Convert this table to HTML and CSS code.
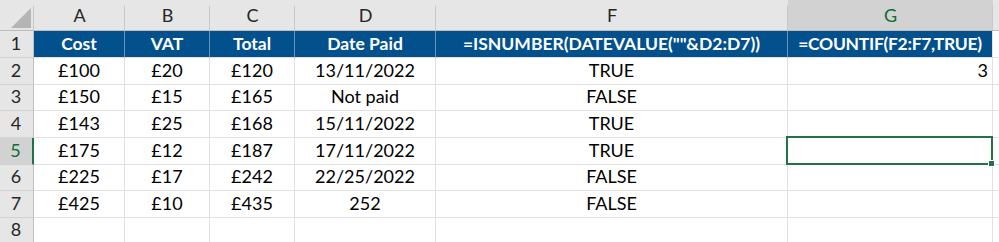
FILE: index.html
```html
<!DOCTYPE html>
<html>
<head>
<meta charset="utf-8">
<link rel="stylesheet" href="styles.css">
</head>
<body>
<div class="sheet">
  <div class="ch corner"><svg width="33" height="30" viewBox="0 0 33 30"><polygon points="31,8 31,28 11,28" fill="#b5b5b5"/></svg></div>
  <div class="ch">A</div><div class="ch">B</div><div class="ch">C</div><div class="ch">D</div><div class="ch">F</div><div class="ch sel">G</div><div class="ch rest"></div>

  <div class="rh">1</div>
  <div class="c hd">Cost</div><div class="c hd">VAT</div><div class="c hd">Total</div><div class="c hd">Date Paid</div><div class="c hd">=ISNUMBER(DATEVALUE(""&amp;D2:D7))</div><div class="c hd last">=COUNTIF(F2:F7,TRUE)</div><div class="c e"></div>

  <div class="rh">2</div>
  <div class="c">£100</div><div class="c">£20</div><div class="c">£120</div><div class="c">13/11/2022</div><div class="c">TRUE</div><div class="c r">3</div><div class="c e"></div>

  <div class="rh">3</div>
  <div class="c">£150</div><div class="c">£15</div><div class="c">£165</div><div class="c">Not paid</div><div class="c">FALSE</div><div class="c r"></div><div class="c e"></div>

  <div class="rh">4</div>
  <div class="c">£143</div><div class="c">£25</div><div class="c">£168</div><div class="c">15/11/2022</div><div class="c">TRUE</div><div class="c r"></div><div class="c e"></div>

  <div class="rh sel">5</div>
  <div class="c">£175</div><div class="c">£12</div><div class="c">£187</div><div class="c">17/11/2022</div><div class="c">TRUE</div><div class="c r active"></div><div class="c e"></div>

  <div class="rh">6</div>
  <div class="c">£225</div><div class="c">£17</div><div class="c">£242</div><div class="c">22/25/2022</div><div class="c">FALSE</div><div class="c r"></div><div class="c e"></div>

  <div class="rh">7</div>
  <div class="c">£425</div><div class="c">£10</div><div class="c">£435</div><div class="c">252</div><div class="c">FALSE</div><div class="c r"></div><div class="c e"></div>

  <div class="rh">8</div>
  <div class="c"></div><div class="c"></div><div class="c"></div><div class="c"></div><div class="c"></div><div class="c r"></div><div class="c e"></div>
</div>
</body>
</html>
```
FILE: styles.css
```css
html, body {
  margin: 0;
  padding: 0;
  background: #ffffff;
  overflow: hidden;
}

.sheet {
  display: grid;
  grid-template-columns: 34px 91px 85px 85px 141px 352px 205px 1fr;
  grid-template-rows: 31px 27px 27px 26px 27px 27px 26px 27px 26px;
  width: 999px;
  height: 242px;
  font-family: Lato, "Open Sans", sans-serif;
  font-size: 18px;
  color: #000;
}

.ch {
  box-sizing: border-box;
  background: linear-gradient(#c8c8c8, #c8c8c8) right 6px / 1px calc(100% - 6px) no-repeat, #e6e6e6;
  border-bottom: 1px solid #bdbdbd;
  display: flex;
  align-items: flex-end;
  justify-content: center;
  padding-bottom: 4px;
  color: #262626;
}

.ch.corner {
  padding: 0;
  align-items: stretch;
  justify-content: flex-start;
}

.ch.sel {
  background: linear-gradient(#c8c8c8, #c8c8c8) right 6px / 1px calc(100% - 6px) no-repeat, #d2d2d2;
  color: #0f6b35;
}

.ch.rest {
  background: #e6e6e6;
}

.rh {
  box-sizing: border-box;
  background: #e6e6e6;
  border-right: 1px solid #c0c0c0;
  border-bottom: 1px solid #d2d2d2;
  display: flex;
  align-items: flex-end;
  justify-content: center;
  padding-bottom: 3px;
  padding-right: 1px;
  color: #262626;
}

.rh.sel {
  background: #d2d2d2;
  color: #0f6b35;
  border-right: 2px solid #217346;
}

.c {
  box-sizing: border-box;
  border-right: 1px solid #e1e1e1;
  border-bottom: 1px solid #e1e1e1;
  display: flex;
  align-items: flex-end;
  justify-content: center;
  padding-bottom: 3px;
  white-space: nowrap;
}

.c.r {
  justify-content: flex-end;
  padding-right: 4px;
}

.c.e {
  border-right: none;
}

.c.hd {
  background: #02508c;
  color: #ffffff;
  font-weight: 700;
  font-size: 17.5px;
  border-right: 1px solid #6b93bd;
  border-bottom: 1px solid #e1e1e1;
}

.c.hd.last {
  border-right: 1px solid #e1e1e1;
  letter-spacing: -0.3px;
}

.active {
  position: relative;
}

.active::before {
  content: "";
  position: absolute;
  left: -2px;
  top: -2px;
  right: -1px;
  bottom: -1px;
  border: 2px solid #217346;
}

.active::after {
  content: "";
  position: absolute;
  right: -3px;
  bottom: -3px;
  width: 5px;
  height: 5px;
  background: #217346;
  border: 1px solid #ffffff;
}
```
